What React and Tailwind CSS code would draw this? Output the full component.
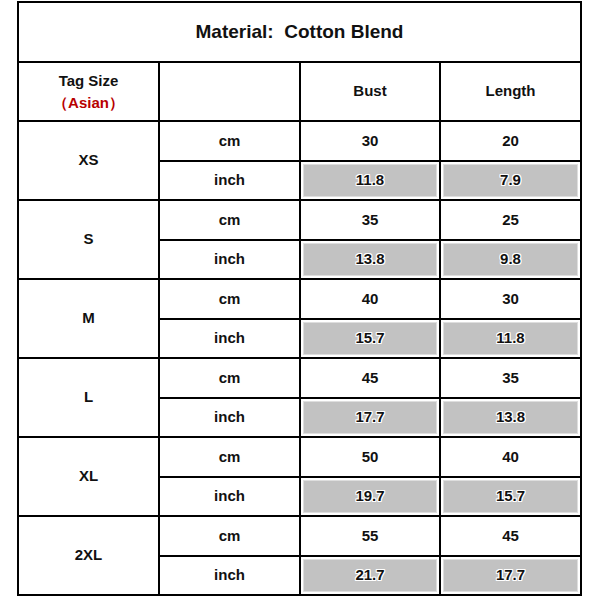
const sizes = [
  { tag: "XS", cm: ["30", "20"], inch: ["11.8", "7.9"] },
  { tag: "S", cm: ["35", "25"], inch: ["13.8", "9.8"] },
  { tag: "M", cm: ["40", "30"], inch: ["15.7", "11.8"] },
  { tag: "L", cm: ["45", "35"], inch: ["17.7", "13.8"] },
  { tag: "XL", cm: ["50", "40"], inch: ["19.7", "15.7"] },
  { tag: "2XL", cm: ["55", "45"], inch: ["21.7", "17.7"] },
];

const cell = "border-2 border-black text-center align-middle p-0";

function GrayCell({ value }) {
  return (
    <td className="border-2 border-black p-[2px] align-middle">
      <div className="h-[33px] flex items-center justify-center bg-[#c2c2c2] border border-[#dedede] [text-shadow:1px_0_0_#fff,-1px_0_0_#fff,0_1px_0_#fff,0_-1px_0_#fff,1px_1px_0_#fff,-1px_-1px_0_#fff,1px_-1px_0_#fff,-1px_1px_0_#fff]">
        {value}
      </div>
    </td>
  );
}

export default function App() {
  return (
    <div className="w-[600px] h-[600px] bg-white pt-px pl-[17px] font-['Liberation_Sans',Arial,sans-serif] font-bold text-[15px] text-[#111]">
      <table className="w-[563px] border-collapse table-fixed">
        <colgroup>
          <col className="w-[141px]" />
          <col className="w-[141px]" />
          <col className="w-[140px]" />
          <col className="w-[141px]" />
        </colgroup>
        <tbody>
          <tr className="h-[60px]">
            <td colSpan={4} className={`${cell} text-[19px] whitespace-pre`}>
              {"Material:  Cotton Blend"}
            </td>
          </tr>
          <tr className="h-[59px]">
            <td className={`${cell} leading-[22px]`}>
              <div>Tag Size</div>
              <div className="text-[#b80000]">（Asian）</div>
            </td>
            <td className={cell}></td>
            <td className={cell}>Bust</td>
            <td className={cell}>Length</td>
          </tr>
          {sizes.map((s) => (
            <>
              <tr key={s.tag + "cm"} className="h-[40px]">
                <td rowSpan={2} className={cell}>
                  {s.tag}
                </td>
                <td className={cell}>cm</td>
                <td className={cell}>{s.cm[0]}</td>
                <td className={cell}>{s.cm[1]}</td>
              </tr>
              <tr key={s.tag + "in"} className="h-[39px]">
                <td className={cell}>inch</td>
                <GrayCell value={s.inch[0]} />
                <GrayCell value={s.inch[1]} />
              </tr>
            </>
          ))}
        </tbody>
      </table>
    </div>
  );
}
